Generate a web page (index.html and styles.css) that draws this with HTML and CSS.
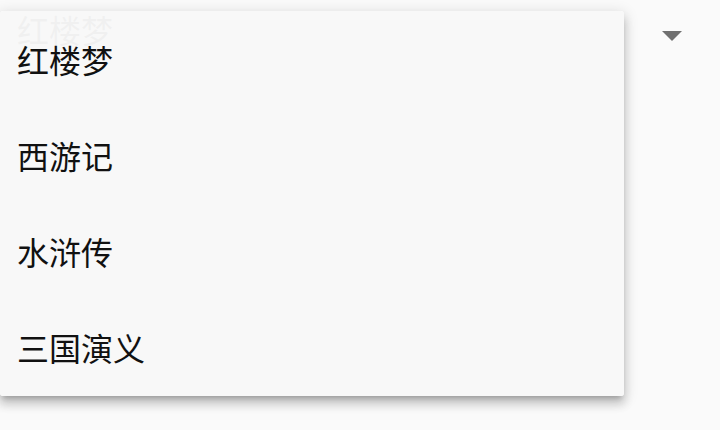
FILE: index.html
```html
<!DOCTYPE html>
<html lang="zh">
<head>
    <meta charset="UTF-8">
    <link rel="stylesheet" href="styles.css">
    <title>Select</title>
</head>
<body>
    <div class="select">
        <div class="select-field">
            <span class="select-value">红楼梦</span>
            <span class="select-arrow"></span>
        </div>
        <ul class="menu">
            <li class="menu-item">红楼梦</li>
            <li class="menu-item">西游记</li>
            <li class="menu-item">水浒传</li>
            <li class="menu-item">三国演义</li>
        </ul>
    </div>
</body>
</html>
```

FILE: styles.css
```css
body {
    margin: 0;
    background-color: #fafafa;
    font-family: "Noto Sans CJK SC", "Noto Sans", sans-serif;
}

.select {
    position: relative;
    width: 720px;
    height: 430px;
}

.select-field {
    display: flex;
    align-items: center;
    height: 58px;
    padding: 0 38px 0 17px;
}

.select-value {
    font-size: 32px;
    color: rgba(0, 0, 0, 0.87);
    line-height: 1;
}

.select-arrow {
    margin-left: auto;
    margin-top: 14px;
    width: 0;
    height: 0;
    border-left: 10px solid transparent;
    border-right: 10px solid transparent;
    border-top: 10px solid #707070;
}

.menu {
    position: absolute;
    top: 11px;
    left: 0;
    width: 624px;
    margin: 0;
    padding: 0 0 1px;
    list-style: none;
    background-color: rgba(248, 248, 248, 0.965);
    border-radius: 3px;
    box-shadow: 0 5px 5px -3px rgba(0, 0, 0, 0.2),
                0 8px 10px 1px rgba(0, 0, 0, 0.14),
                0 3px 14px 2px rgba(0, 0, 0, 0.12);
}

.menu-item {
    display: flex;
    align-items: center;
    height: 96px;
    padding-left: 17px;
    font-size: 32px;
    color: #111;
}
```
